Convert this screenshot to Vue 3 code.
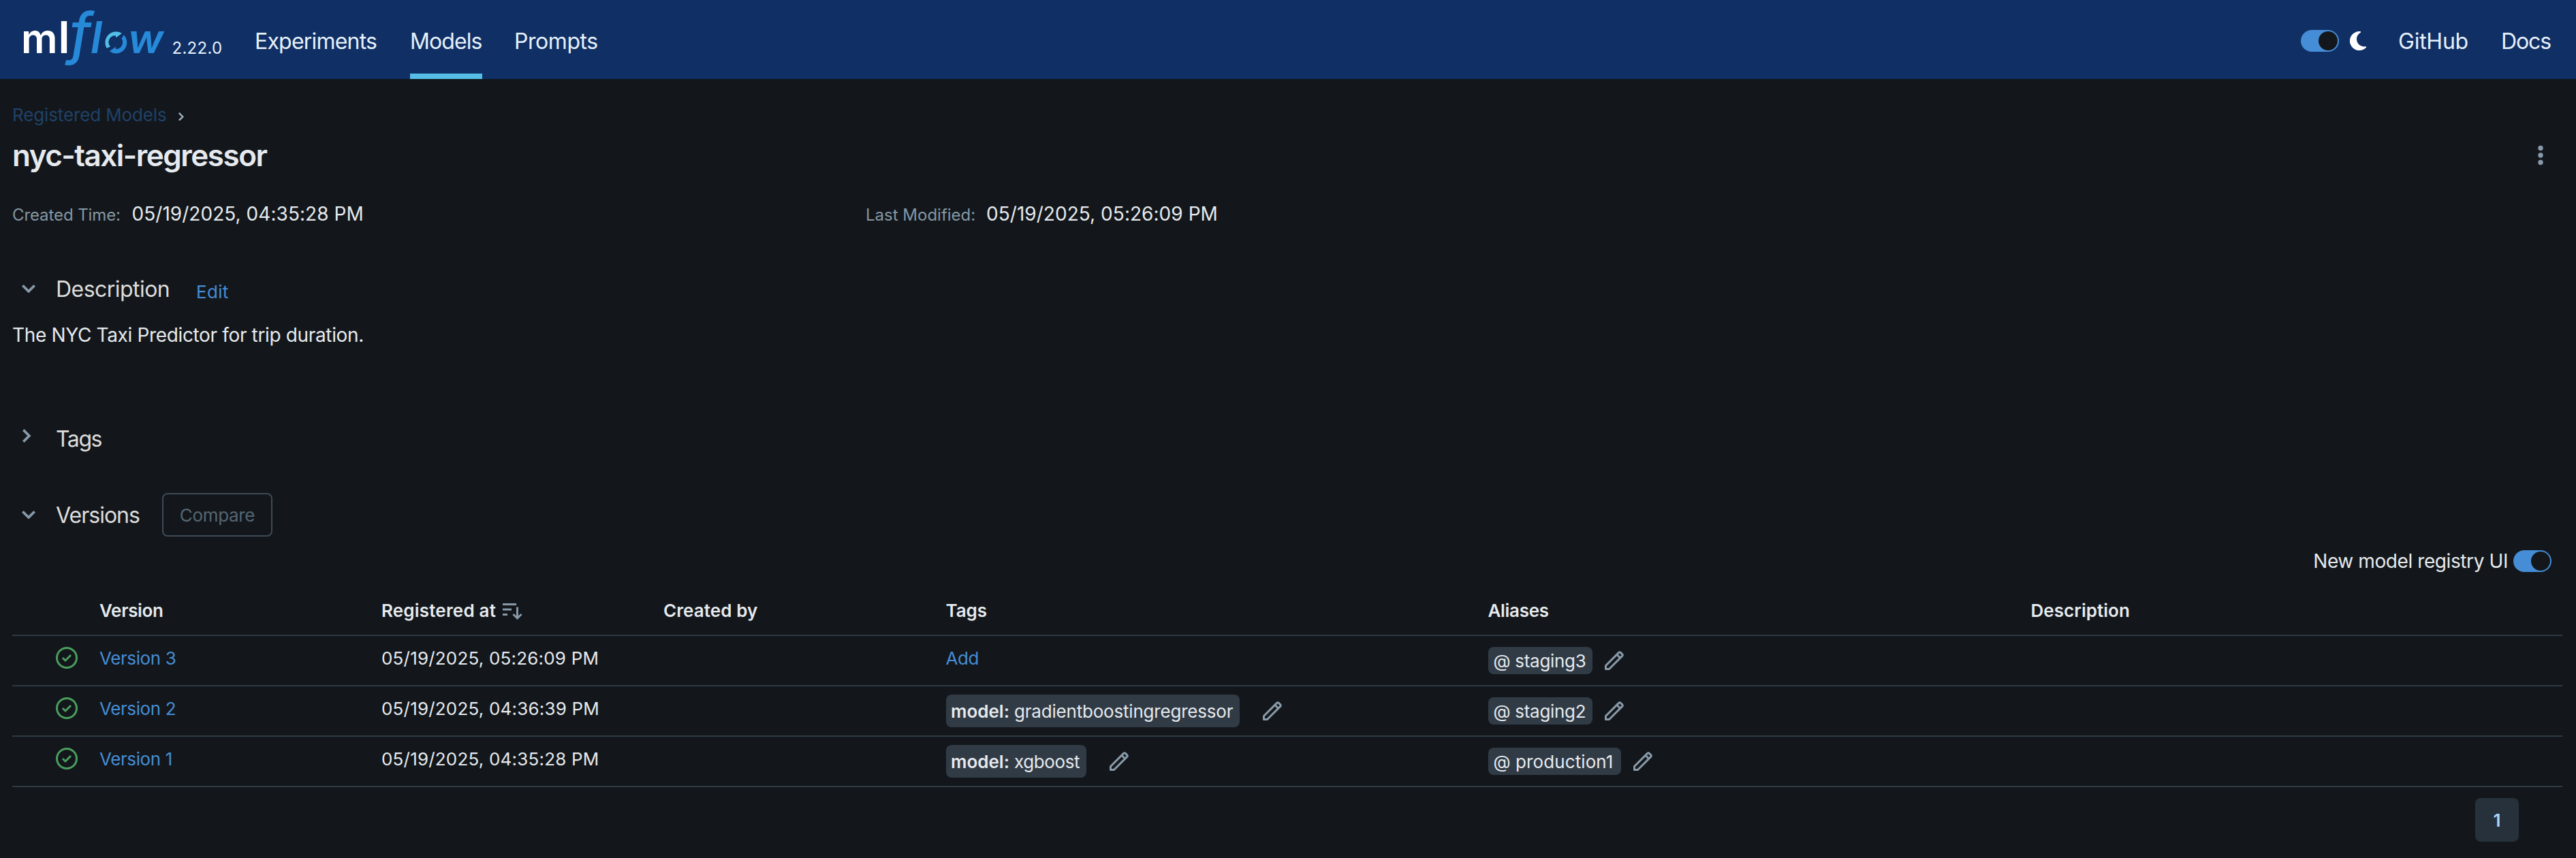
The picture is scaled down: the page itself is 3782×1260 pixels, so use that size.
<script setup>
const links = [
  { label: 'Experiments', cls: 'experiments' },
  { label: 'Models', cls: 'models', active: true },
  { label: 'Prompts', cls: 'prompts' },
]

const versions = [
  { name: 'Version 3', date: '05/19/2025, 05:26:09 PM', alias: 'staging3' },
  { name: 'Version 2', date: '05/19/2025, 04:36:39 PM', tag: 'gradientboostingregressor', alias: 'staging2' },
  { name: 'Version 1', date: '05/19/2025, 04:35:28 PM', tag: 'xgboost', alias: 'production1', wide: true },
]

const pencilBody = 'M1.750 11.750 11.300 2.200a1 1 0 0 1 1.400 0l1.100 1.100a1 1 0 0 1 0 1.400L4.250 14.250H1.750Z'
const pencilBand = 'M9.900 3.600l2.500 2.500'
const chevronDown = 'M8 8.917 10.947 6 12 7.042 8 11 4 7.042 5.053 6z'
const chevronRight = 'M8.917 8 6 5.053 7.042 4 11 8l-3.958 4L6 10.947z'
</script>

<template>
  <div class="page">
    <header class="topbar">
      <svg class="logo" width="216" height="92" viewBox="30 10 216 92">
        <g class="logo-ml">
          <text x="31" y="78" font-size="59" textLength="53.500" lengthAdjust="spacingAndGlyphs">m</text>
          <text x="85.500" y="78" font-size="64" textLength="17" lengthAdjust="spacingAndGlyphs">l</text>
        </g>
        <text class="logo-f" x="102.200" y="78.200" font-size="82">f</text>
        <g class="logo-low">
          <text x="133" y="78" font-size="64">l</text>
          <text x="188" y="78" font-size="59" textLength="52" lengthAdjust="spacingAndGlyphs">w</text>
        </g>
        <path fill="#53bfe6" d="M156.700 70.700A16 16 0 0 1 179 49L170.300 55.300L169.700 52.300A9.700 9.700 0 0 0 162 68.500Z" />
        <path fill="#268ad8" d="M182 51.600A16 16 0 0 1 160.700 75.300L170 68.700V72A10 10 0 0 0 178.300 56.300Z" />
      </svg>
      <span class="release">2.22.0</span>
      <nav class="links">
        <a v-for="l in links" :key="l.label" :class="['link', l.cls, { active: l.active }]">{{ l.label }}</a>
      </nav>
      <div class="right">
        <span class="switch"><i></i></span>
        <svg class="moon" width="24" height="28" viewBox="0 0 24 28">
          <path fill="#fff" d="M16 .2A14 14 0 1 0 24 23.700V22.300C15.500 23.500 10 17.800 10 11.500C10 7 12.300 3.500 16 1.700Z" />
        </svg>
        <a class="link github">GitHub</a>
        <a class="link docs">Docs</a>
      </div>
    </header>

    <main>
      <div class="crumbs">
        <a>Registered Models</a>
        <svg width="8" height="12.800" viewBox="6 4 5 8"><path :d="chevronRight" fill="#a3b1bd" /></svg>
      </div>
      <div class="title-row">
        <h1>nyc-taxi-regressor</h1>
        <svg width="8" height="30" viewBox="0 0 8 30" fill="#8899a8">
          <circle cx="4" cy="4.500" r="3.700" /><circle cx="4" cy="15" r="3.700" /><circle cx="4" cy="25.500" r="3.700" />
        </svg>
      </div>
      <div class="meta">
        <div class="created"><span class="label">Created Time:</span><span class="value">05/19/2025, 04:35:28 PM</span></div>
        <div class="modified"><span class="label">Last Modified:</span><span class="value">05/19/2025, 05:26:09 PM</span></div>
      </div>

      <section class="section description">
        <span class="chev"><svg width="20" height="12.500" viewBox="4 6 8 5"><path :d="chevronDown" /></svg></span>
        <h2 class="h-desc">Description</h2>
        <a class="edit">Edit</a>
      </section>
      <p class="text">The NYC Taxi Predictor for trip duration.</p>

      <section class="section tags">
        <span class="chev side"><svg width="12.500" height="20" viewBox="6 4 5 8"><path :d="chevronRight" /></svg></span>
        <h2 class="h-tags">Tags</h2>
      </section>

      <section class="section versions">
        <span class="chev"><svg width="20" height="12.500" viewBox="4 6 8 5"><path :d="chevronDown" /></svg></span>
        <h2 class="h-versions">Versions</h2>
        <button class="compare">Compare</button>
      </section>

      <div class="registry">
        <span>New model registry UI</span>
        <span class="switch"><i></i></span>
      </div>

      <div class="table">
        <div class="row head">
          <div></div>
          <div class="c-version">Version</div>
          <div class="sorted">
            Registered at
            <svg width="32" height="32" viewBox="0 0 32 32" fill="none" stroke="#8899a8" stroke-width="3">
              <path d="M2 6.500h20M2 14h13M2 21.500h7M23.500 10.500v16M17.500 21l6 6l6-6" />
            </svg>
          </div>
          <div class="c-created">Created by</div>
          <div class="c-tags">Tags</div>
          <div class="c-aliases">Aliases</div>
          <div class="c-desc">Description</div>
        </div>
        <div v-for="v in versions" :key="v.name" class="row">
          <div class="status">
            <svg width="32" height="32" viewBox="0 0 16 16">
              <circle cx="8" cy="8" r="7.250" fill="none" stroke="#4a9f5e" stroke-width="1.500" />
              <path fill="#4a9f5e" d="M11.530 6.530 7 11.060 4.470 8.530l1.060-1.060L7 8.940l3.470-3.470 1.060 1.060Z" />
            </svg>
          </div>
          <div class="name">{{ v.name }}</div>
          <div class="date">{{ v.date }}</div>
          <div></div>
          <div v-if="v.tag" class="tag-cell">
            <span class="tag"><b>model:</b><span :class="v.tag">{{ v.tag }}</span></span>
            <svg class="pencil" width="32" height="32" viewBox="0 0 16 16"><path :d="pencilBody" /><path :d="pencilBand" /></svg>
          </div>
          <div v-else class="add">Add</div>
          <div class="alias-cell">
            <span :class="['alias', { wide: v.wide }]">@ {{ v.alias }}</span>
            <svg class="pencil" width="32" height="32" viewBox="0 0 16 16"><path :d="pencilBody" /><path :d="pencilBand" /></svg>
          </div>
          <div></div>
        </div>
      </div>
      <div class="pages"><span>1</span></div>
    </main>
  </div>
</template>

<style>
body {
  background: #13171b;
}
</style>

<style scoped>
.page {
  width: 3782px;
  height: 1260px;
  overflow: hidden;
  background: #13171b;
  color: #e6eaee;
  font-family: Inter, "Liberation Sans", sans-serif;
  font-size: 26px;
}
.page * {
  box-sizing: border-box;
}
svg {
  display: block;
  flex: none;
}
.topbar {
  height: 116px;
  background: #102f64;
  display: flex;
  align-items: flex-start;
}
.logo {
  margin: 10px 0 0 30px;
  overflow: visible;
}
.logo-ml {
  fill: #fff;
  font-weight: 600;
}
.logo-f {
  fill: #268ad8;
  font-style: italic;
  font-weight: 500;
}
.logo-low {
  fill: #268ad8;
  font-style: italic;
  font-weight: 600;
}
.release {
  width: 122px;
  padding-left: 6.500px;
  line-height: 32px;
  margin-top: 55px;
  font-size: 24px;
  letter-spacing: 0.270px;
  color: #e6f1fb;
}
.links {
  display: flex;
  margin-left: 6px;
  gap: 48px;
}
.link {
  height: 116px;
  line-height: 122px;
  font-size: 32px;
  color: #e6f1fb;
  white-space: nowrap;
}
.active {
  border-bottom: 8px solid #55bde6;
}
.experiments {
  width: 180px;
  letter-spacing: -0.800px;
}
.models {
  width: 106px;
  letter-spacing: -0.900px;
}
.prompts {
  width: 124px;
  margin-left: -1px;
  letter-spacing: -0.440px;
}
.right {
  margin-left: auto;
  display: flex;
  align-items: flex-start;
}
.switch {
  width: 56px;
  height: 32px;
  border-radius: 16px;
  background: #458dd6;
  padding: 2px;
  display: flex;
  justify-content: flex-end;
  flex: none;
}
.switch i {
  width: 28px;
  height: 28px;
  border-radius: 50%;
  background: #13171b;
}
.right .switch {
  margin-top: 44px;
}
.moon {
  margin: 46px 47px 0 16px;
}
.github {
  width: 151px;
  letter-spacing: -0.240px;
}
.docs {
  width: 110px;
  letter-spacing: -1.090px;
}
main {
  padding: 32px 20px 0 18px;
}
.crumbs {
  height: 40px;
  display: flex;
  align-items: center;
  gap: 17px;
  color: #1f4268;
  letter-spacing: -0.130px;
}
.crumbs svg {
  margin-top: 6px;
}
.title-row {
  height: 56px;
  margin-top: 12px;
  display: flex;
  justify-content: space-between;
  align-items: center;
  padding-right: 28px;
}
h1 {
  margin: 0;
  font-size: 44px;
  line-height: 56px;
  font-weight: 600;
  letter-spacing: -1.510px;
}
.meta {
  margin-top: 38px;
  height: 40px;
  line-height: 40px;
  display: flex;
}
.created {
  width: 1253px;
}
.label {
  display: inline-block;
  width: 175.500px;
  font-size: 24px;
  color: #8597a4;
  letter-spacing: -0.100px;
}
.modified .label {
  width: 177px;
  letter-spacing: 0;
}
.value {
  font-size: 28px;
  letter-spacing: 0.040px;
}
.section {
  display: flex;
  align-items: center;
  height: 40px;
}
.chev {
  width: 64px;
  padding-left: 14px;
}
.chev path {
  fill: #8899a8;
}
.side {
  padding-left: 15px;
  margin-top: -8px;
}
h2 {
  margin: 0;
  padding-top: 2px;
  font-size: 32px;
  line-height: 40px;
  font-weight: 400;
  color: #dedddb;
}
.description {
  margin-top: 70px;
}
.h-desc {
  width: 206px;
  letter-spacing: -0.540px;
}
.edit {
  color: #458dd6;
  padding-top: 9px;
  letter-spacing: 0.300px;
}
.text {
  margin: 28px 0 0;
  height: 40px;
  line-height: 41px;
  font-size: 28px;
  letter-spacing: -0.350px;
}
.tags {
  margin-top: 112px;
}
.h-tags {
  letter-spacing: -1.440px;
}
.versions {
  margin-top: 60px;
  height: 64px;
}
.h-versions {
  width: 156px;
  letter-spacing: -0.980px;
}
.compare {
  width: 162px;
  height: 64px;
  border: 2px solid #3e4a56;
  border-radius: 8px;
  background: transparent;
  color: #556672;
  font: 400 26px Inter, sans-serif;
  letter-spacing: -0.330px;
  padding: 0;
}
.registry {
  margin-top: 20px;
  height: 32px;
  line-height: 32px;
  padding-right: 16px;
  display: flex;
  justify-content: flex-end;
  gap: 8px;
  font-size: 28px;
  letter-spacing: -0.410px;
}
.table {
  margin-top: 20px;
}
.row {
  display: grid;
  grid-template-columns: 128px 414px 414px 414.500px 796px 796px 1fr;
  height: 74px;
  border-bottom: 2px solid #2f3a43;
  line-height: 33px;
  padding-top: 16px;
}
.head {
  font-weight: 600;
  line-height: 73px;
  padding-top: 0;
  letter-spacing: -0.100px;
}
.c-version,
.c-aliases {
  letter-spacing: -0.320px;
}
.c-created {
  letter-spacing: 0.090px;
}
.c-desc {
  padding-left: 1px;
  letter-spacing: 0.050px;
}
.sorted {
  display: flex;
  gap: 8px;
  align-items: center;
  letter-spacing: 0.180px;
}
.status {
  padding-left: 64px;
}
.name,
.add {
  color: #458dd6;
  letter-spacing: -0.400px;
}
.date {
  letter-spacing: 0.190px;
}
.tag-cell {
  display: flex;
  gap: 32px;
  align-items: center;
  height: 48px;
  margin-top: -4px;
}
.tag {
  height: 48px;
  line-height: 49px;
  border-radius: 8px;
  background: #313b45;
  padding: 0 9px 0 7.500px;
  display: flex;
}
.tag b {
  font-weight: 600;
  width: 93px;
}
.gradientboostingregressor {
  width: 321.500px;
  letter-spacing: -0.200px;
}
.xgboost {
  width: 96.500px;
  letter-spacing: -0.400px;
}
.pencil {
  fill: none;
  stroke: #8899a8;
  stroke-width: 1.500;
  stroke-linejoin: round;
}
.alias-cell {
  display: flex;
  gap: 16px;
  align-items: center;
  height: 40px;
}
.alias {
  width: 153px;
  height: 40px;
  line-height: 41px;
  border-radius: 8px;
  background: #313b45;
  padding-left: 8px;
  letter-spacing: -0.300px;
  white-space: nowrap;
}
.wide {
  width: 195px;
  letter-spacing: 0.090px;
}
.pages {
  margin-top: 16px;
  padding-right: 64px;
  display: flex;
  justify-content: flex-end;
}
.pages span {
  width: 64px;
  height: 64px;
  border-radius: 8px;
  background: #27313b;
  color: #aad7fb;
  font-weight: 600;
  line-height: 65px;
  text-align: center;
}
</style>
